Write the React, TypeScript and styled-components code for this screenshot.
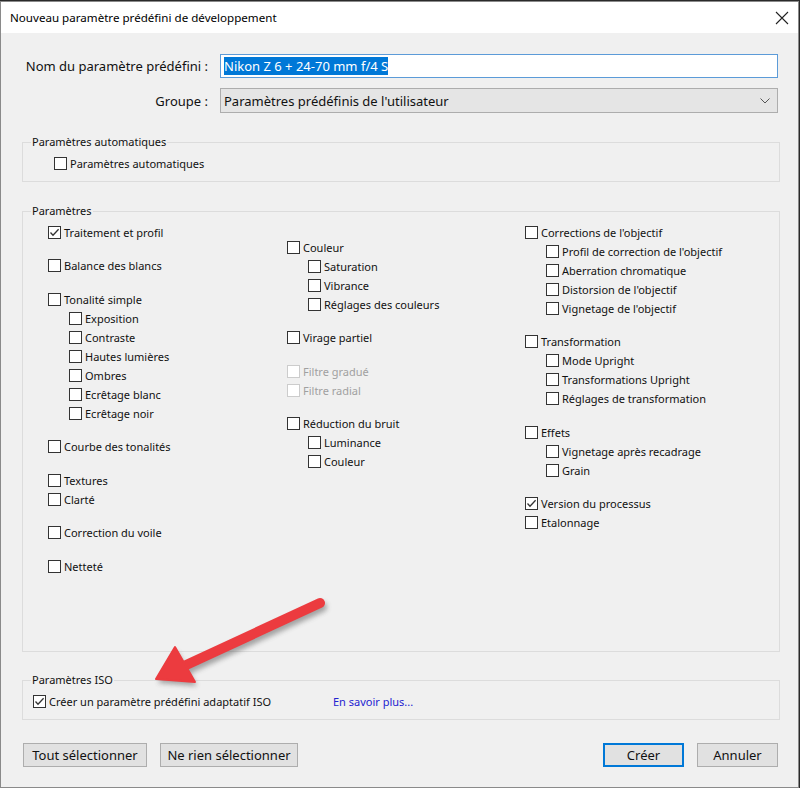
import React from 'react';
import styled, { createGlobalStyle } from 'styled-components';

type Item = { label: string; checked?: boolean; disabled?: boolean; sub?: boolean };
type Column = { offset: boolean; groups: Item[][] };

const columns: Column[] = [
  {
    offset: false,
    groups: [
      [{ label: 'Traitement et profil', checked: true }],
      [{ label: 'Balance des blancs' }],
      [
        { label: 'Tonalité simple' },
        { label: 'Exposition', sub: true },
        { label: 'Contraste', sub: true },
        { label: 'Hautes lumières', sub: true },
        { label: 'Ombres', sub: true },
        { label: 'Ecrêtage blanc', sub: true },
        { label: 'Ecrêtage noir', sub: true },
      ],
      [{ label: 'Courbe des tonalités' }],
      [{ label: 'Textures' }, { label: 'Clarté' }],
      [{ label: 'Correction du voile' }],
      [{ label: 'Netteté' }],
    ],
  },
  {
    offset: true,
    groups: [
      [
        { label: 'Couleur' },
        { label: 'Saturation', sub: true },
        { label: 'Vibrance', sub: true },
        { label: 'Réglages des couleurs', sub: true },
      ],
      [{ label: 'Virage partiel' }],
      [
        { label: 'Filtre gradué', disabled: true },
        { label: 'Filtre radial', disabled: true },
      ],
      [
        { label: 'Réduction du bruit' },
        { label: 'Luminance', sub: true },
        { label: 'Couleur', sub: true },
      ],
    ],
  },
  {
    offset: false,
    groups: [
      [
        { label: "Corrections de l'objectif" },
        { label: "Profil de correction de l'objectif", sub: true },
        { label: 'Aberration chromatique', sub: true },
        { label: "Distorsion de l'objectif", sub: true },
        { label: "Vignetage de l'objectif", sub: true },
      ],
      [
        { label: 'Transformation' },
        { label: 'Mode Upright', sub: true },
        { label: 'Transformations Upright', sub: true },
        { label: 'Réglages de transformation', sub: true },
      ],
      [
        { label: 'Effets' },
        { label: 'Vignetage après recadrage', sub: true },
        { label: 'Grain', sub: true },
      ],
      [{ label: 'Version du processus', checked: true }, { label: 'Etalonnage' }],
    ],
  },
];

const GlobalStyle = createGlobalStyle`
  body {
    margin: 0;
    background: #2a2a2a;
    font-family: "Noto Sans", "Open Sans", sans-serif;
  }
  * { box-sizing: border-box; }
`;

const Check: React.FC<{ checked?: boolean; disabled?: boolean }> = ({ checked, disabled }) => (
  <Box $disabled={disabled}>
    {checked && (
      <svg width="11" height="11" viewBox="0 0 11 11">
        <polyline points="1.5,5.5 4,8.2 9.6,2.2" fill="none" stroke="#333" strokeWidth="1.3" />
      </svg>
    )}
  </Box>
);

const App: React.FC = () => {
  return (
    <Window>
      <GlobalStyle />
      <TitleBar>
        <Title>Nouveau paramètre prédéfini de développement</Title>
        <svg width="14" height="14" viewBox="0 0 14 14">
          <path d="M1 1 L13 13 M13 1 L1 13" stroke="#222" strokeWidth="1.1" />
        </svg>
      </TitleBar>
      <Body>
        <Form>
          <FieldLabel>Nom du paramètre prédéfini :</FieldLabel>
          <TextInput>
            <Selection>Nikon Z 6 + 24-70 mm f/4 S</Selection>
          </TextInput>
          <FieldLabel>Groupe :</FieldLabel>
          <Select>
            <span>Paramètres prédéfinis de l'utilisateur</span>
            <svg width="10" height="6" viewBox="0 0 10 6">
              <polyline points="0.5,0.5 5,5 9.5,0.5" fill="none" stroke="#555" strokeWidth="1" />
            </svg>
          </Select>
        </Form>

        <Group $height={48} $top={21}>
          <Legend>Paramètres automatiques</Legend>
          <Row $indent={23} $pad={3.5}>
            <Check />
            <Label>Paramètres automatiques</Label>
          </Row>
        </Group>

        <Group $height={449} $top={21}>
          <Legend>Paramètres</Legend>
          <Columns>
            {columns.map((col, ci) => (
              <Col key={ci} $offset={col.offset}>
                {col.groups.map((g, gi) => (
                  <div key={gi}>
                    {g.map((it) => (
                      <Row key={it.label} $indent={it.sub ? 21 : 0}>
                        <Check checked={it.checked} disabled={it.disabled} />
                        <Label $disabled={it.disabled}>{it.label}</Label>
                      </Row>
                    ))}
                  </div>
                ))}
              </Col>
            ))}
          </Columns>
        </Group>

        <Group $height={48} $top={20}>
          <Legend>Paramètres ISO</Legend>
          <IsoRow>
            <Row $indent={0}>
              <Check checked />
              <Label>Créer un paramètre prédéfini adaptatif ISO</Label>
            </Row>
            <Link>En savoir plus...</Link>
          </IsoRow>
        </Group>

        <Buttons>
          <ButtonGroup>
            <Button $width={124}>Tout sélectionner</Button>
            <Button $width={138}>Ne rien sélectionner</Button>
          </ButtonGroup>
          <ButtonGroup>
            <Button $width={81} $primary>Créer</Button>
            <Button $width={81}>Annuler</Button>
          </ButtonGroup>
        </Buttons>
      </Body>

      <Arrow width="800" height="788" viewBox="0 0 800 788">
        <defs>
          <filter id="sh" x="-20%" y="-20%" width="140%" height="140%">
            <feGaussianBlur stdDeviation="2.5" />
          </filter>
        </defs>
        <g transform="translate(2 4)" opacity="0.45" filter="url(#sh)">
          <line x1="320" y1="602" x2="184" y2="665" stroke="#444" strokeWidth="10" strokeLinecap="round" />
          <polygon points="156,678 175,646 195,681" fill="#444" />
        </g>
        <line x1="320" y1="602" x2="184" y2="665" stroke="#ec3b3f" strokeWidth="10" strokeLinecap="round" />
        <polygon points="156,678 175,646 195,681" fill="#ec3b3f" stroke="#ec3b3f" strokeWidth="2" strokeLinejoin="round" />
      </Arrow>
    </Window>
  );
};

const Window = styled.div`
  position: relative;
  width: 799px;
  height: 787px;
  margin-top: 1px;
  border: 1px solid #8a8a8a;
  background: #f0f0f0;
  display: flex;
  flex-direction: column;
  color: #000;
`;

const TitleBar = styled.div`
  height: 31px;
  background: #fff;
  display: flex;
  align-items: center;
  justify-content: space-between;
  padding: 0 9px;
`;

const Title = styled.div`
  font-size: 11.6px;
`;

const Body = styled.div`
  flex: 1;
  padding: 21px 18px 0 21px;
  display: flex;
  flex-direction: column;
`;

const Form = styled.div`
  display: grid;
  grid-template-columns: 186px 558px;
  row-gap: 10px;
  column-gap: 12px;
  align-items: center;
`;

const FieldLabel = styled.div`
  text-align: right;
  font-size: 13px;
  color: #111;
  white-space: nowrap;
`;

const TextInput = styled.div`
  height: 24px;
  border: 1px solid #5c9bd8;
  background: #fff;
  padding: 0 3px;
  display: flex;
  align-items: center;
  font-size: 13px;
`;

const Selection = styled.span`
  background: #0078d7;
  color: #fff;
  line-height: 18px;
`;

const Select = styled.div`
  height: 25px;
  border: 1px solid #adadad;
  background: #e5e5e5;
  padding: 0 7px 0 3px;
  display: flex;
  align-items: center;
  justify-content: space-between;
  font-size: 13px;
  color: #111;
`;

const Group = styled.fieldset<{ $height: number; $top: number }>`
  margin: ${(p) => p.$top}px 0 0 0;
  padding: 0 8px;
  border: 1px solid #dcdcdc;
  height: ${(p) => p.$height}px;
  min-inline-size: 0;
`;

const Legend = styled.legend`
  padding: 0 1px;
  font-size: 11px;
  line-height: 16px;
  color: #111;
`;

const Columns = styled.div`
  display: grid;
  grid-template-columns: 239px 238px 1fr;
  padding: 3.5px 0 0 17px;
`;

const Col = styled.div<{ $offset: boolean }>`
  display: flex;
  flex-direction: column;
  gap: 14.5px;
  padding-top: ${(p) => (p.$offset ? 15 : 0)}px;
`;

const Row = styled.div<{ $indent: number; $pad?: number }>`
  display: flex;
  align-items: center;
  height: 19px;
  margin-left: ${(p) => p.$indent}px;
  margin-top: ${(p) => p.$pad ?? 0}px;
`;

const Box = styled.span<{ $disabled?: boolean }>`
  width: 13px;
  height: 13px;
  border: 1px solid ${(p) => (p.$disabled ? '#cccccc' : '#333')};
  background: #fff;
  display: flex;
  align-items: center;
  justify-content: center;
  flex: none;
`;

const Label = styled.span<{ $disabled?: boolean }>`
  margin-left: 3px;
  font-size: 11px;
  color: ${(p) => (p.$disabled ? '#a0a0a0' : '#111')};
  white-space: nowrap;
`;

const IsoRow = styled.div`
  display: grid;
  grid-template-columns: 300px auto;
  align-items: center;
  margin: 3.5px 0 0 2px;
`;

const Link = styled.span`
  font-size: 11px;
  color: #2323d0;
`;

const Buttons = styled.div`
  margin-top: 23px;
  padding: 0 2px 0 1px;
  display: flex;
  justify-content: space-between;
`;

const ButtonGroup = styled.div`
  display: flex;
  gap: 13px;
`;

const Button = styled.button<{ $width: number; $primary?: boolean }>`
  width: ${(p) => p.$width}px;
  height: 24px;
  padding: 0;
  background: #e1e1e1;
  border: ${(p) => (p.$primary ? '2px solid #0078d7' : '1px solid #adadad')};
  font-family: inherit;
  font-size: 13px;
  color: #111;
`;

const Arrow = styled.svg`
  position: absolute;
  top: -1px;
  left: -1px;
  pointer-events: none;
`;

export default App;
